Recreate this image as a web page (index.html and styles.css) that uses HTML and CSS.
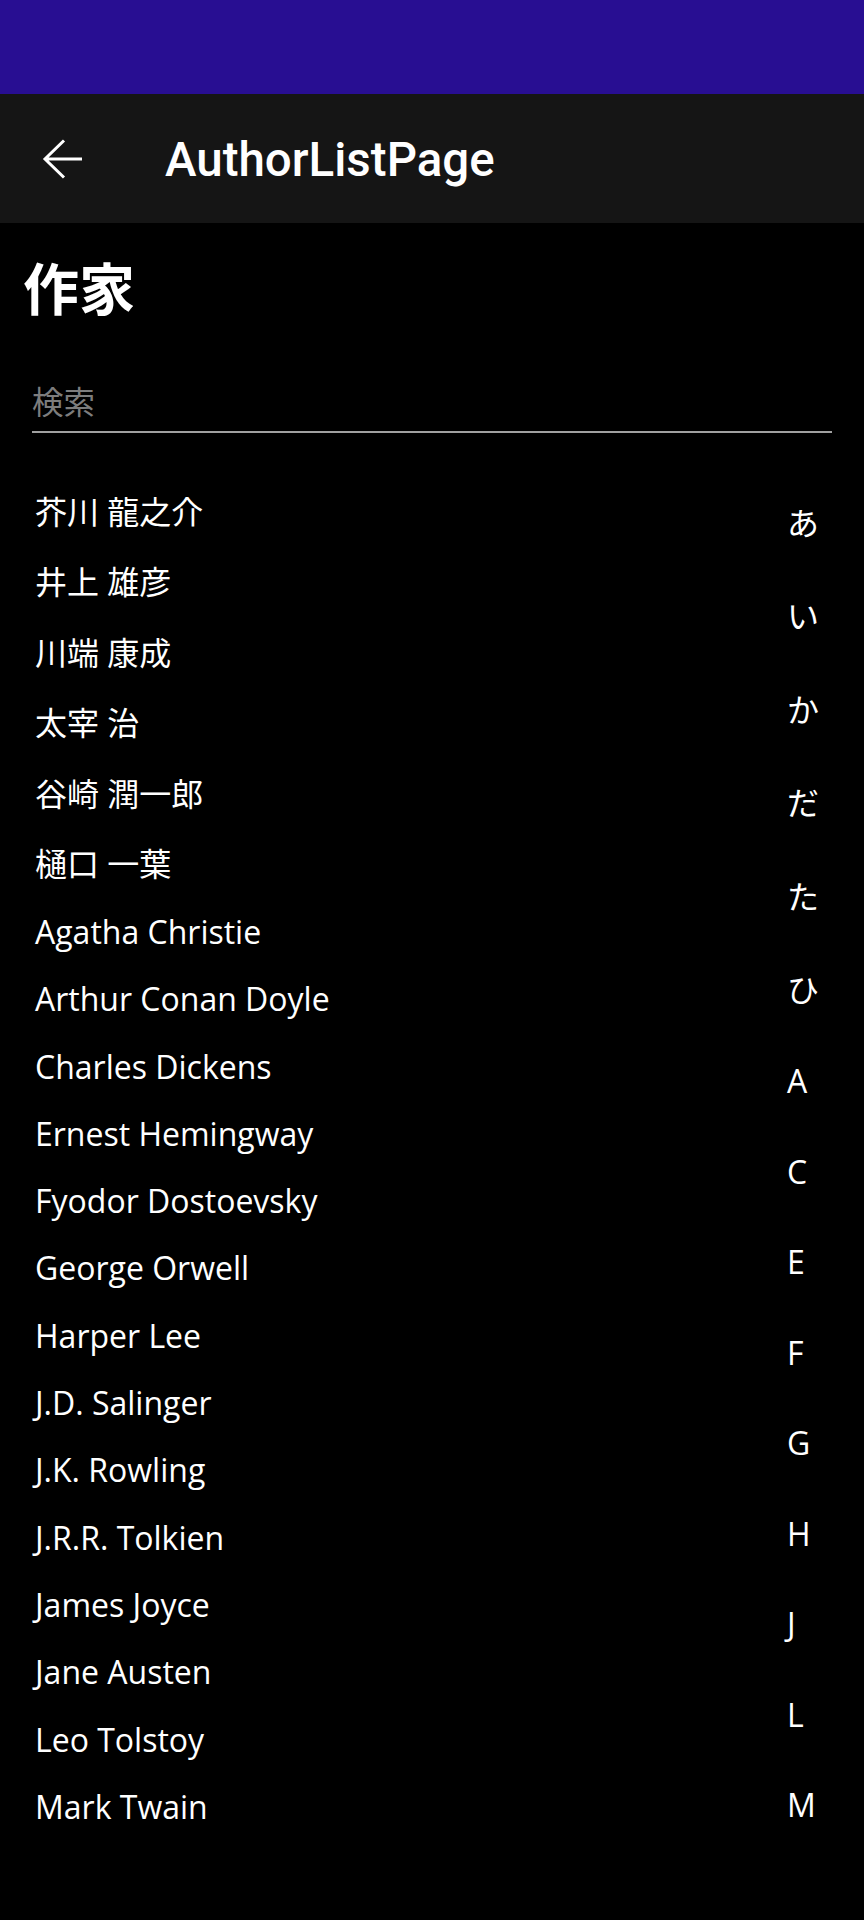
FILE: index.html
```html
<!DOCTYPE html>
<html lang="ja">
<head>
<meta charset="utf-8">
<title>AuthorListPage</title>
<link rel="stylesheet" href="styles.css">
</head>
<body>
<div class="statusbar"></div>
<header class="toolbar">
  <svg class="back" width="42" height="40" viewBox="0 0 42 40" aria-hidden="true">
    <path d="M22 1.5 L3 20 L22 38.5 M3 20 H40" fill="none" stroke="#ffffff" stroke-width="3"/>
  </svg>
  <div class="title">AuthorListPage</div>
</header>
<main class="page">
  <h1 class="heading">作家</h1>
  <div class="search"><span class="placeholder">検索</span></div>
  <div class="listwrap">
    <ul class="list">
      <li class="ja">芥川 龍之介</li>
      <li class="ja">井上 雄彦</li>
      <li class="ja">川端 康成</li>
      <li class="ja">太宰 治</li>
      <li class="ja">谷崎 潤一郎</li>
      <li class="ja">樋口 一葉</li>
      <li>Agatha Christie</li>
      <li>Arthur Conan Doyle</li>
      <li>Charles Dickens</li>
      <li>Ernest Hemingway</li>
      <li>Fyodor Dostoevsky</li>
      <li>George Orwell</li>
      <li>Harper Lee</li>
      <li>J.D. Salinger</li>
      <li>J.K. Rowling</li>
      <li>J.R.R. Tolkien</li>
      <li>James Joyce</li>
      <li>Jane Austen</li>
      <li>Leo Tolstoy</li>
      <li>Mark Twain</li>
    </ul>
    <ul class="index">
      <li class="ja">あ</li>
      <li class="ja">い</li>
      <li class="ja">か</li>
      <li class="ja">だ</li>
      <li class="ja">た</li>
      <li class="ja">ひ</li>
      <li>A</li>
      <li>C</li>
      <li>E</li>
      <li>F</li>
      <li>G</li>
      <li>H</li>
      <li>J</li>
      <li>L</li>
      <li>M</li>
    </ul>
  </div>
</main>
</body>
</html>
```

FILE: styles.css
```css
html, body {
  margin: 0;
  padding: 0;
  background: #000000;
  color: #ffffff;
}
body {
  width: 864px;
  min-height: 1920px;
  overflow: hidden;
  font-family: "Open Sans", "Noto Sans CJK JP", sans-serif;
}
.statusbar {
  height: 94px;
  background: #280e92;
}
.toolbar {
  height: 129px;
  background: #151515;
  display: flex;
  align-items: center;
}
.back {
  display: block;
  margin-left: 42px;
  flex: none;
}
.title {
  margin-left: 81px;
  font-family: Roboto, "Noto Sans", sans-serif;
  font-weight: 500;
  font-size: 47.5px;
  line-height: 1;
  color: #ffffff;
  padding-top: 4px;
}
.page {
  display: flex;
  flex-direction: column;
}
.heading {
  margin: 22px 0 0 23px;
  font-family: "Noto Sans CJK JP", sans-serif;
  font-weight: 700;
  font-size: 56px;
  line-height: normal;
}
.search {
  margin: 51px 32px 0 32px;
  padding-bottom: 8px;
  border-bottom: 2px solid #a0a0a0;
  font-family: "Noto Sans CJK JP", sans-serif;
  font-size: 31.5px;
  line-height: normal;
}
.placeholder {
  color: #7d7d7d;
}
.listwrap {
  display: flex;
  margin-top: 43px;
  padding-left: 35px;
}
.list, .index {
  list-style: none;
  margin: 0;
  padding: 0;
  font-size: 32px;
}
.list {
  flex: 1;
}
.list li {
  box-sizing: border-box;
  height: 67.3px;
  padding-bottom: 1.2px;
  line-height: 66.1px;
}
.list li.ja {
  height: 70.5px;
  padding-top: 1.8px;
  padding-bottom: 0;
  line-height: 68.7px;
}
.index {
  width: 77px;
  flex: none;
}
.index li {
  height: 90.5px;
  line-height: 90.5px;
}
.index li.ja {
  height: 93.4px;
  line-height: 93.4px;
}
```
